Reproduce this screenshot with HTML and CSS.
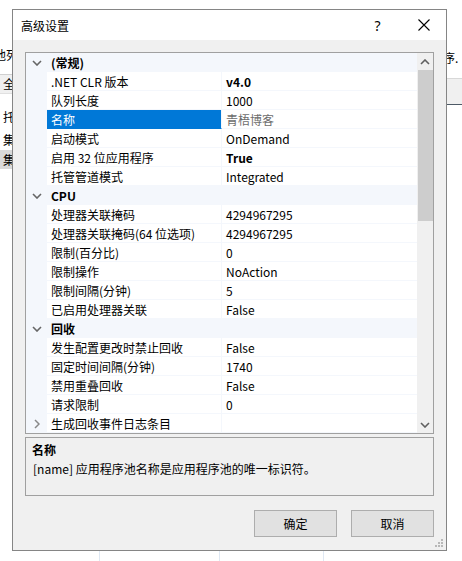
FILE: index.html
```html
<!DOCTYPE html>
<html lang="zh-CN">
<head>
<meta charset="utf-8">
<title>高级设置</title>
<link rel="stylesheet" href="styles.css">
</head>
<body>
<div class="desktop">
  <div class="bg-left">
    <div class="bg-text t1">池列</div>
    <div class="bg-tab">全</div>
    <div class="bg-text t2">托</div>
    <div class="bg-text t3">集</div>
    <div class="bg-sel">集</div>
  </div>
  <div class="bg-right">
    <div class="bg-text r1">程序.</div>
    <div class="bg-hdr"></div>
  </div>
  <div class="vline v1"></div>
  <div class="vline v2"></div>
  <div class="vline v3"></div>

  <div class="dialog">
    <div class="titlebar">
      <span class="title">高级设置</span>
      <span class="help">?</span>
      <svg class="close" width="12" height="12" viewBox="0 0 12 12"><path d="M0.5 0.5 L11.5 11.5 M11.5 0.5 L0.5 11.5" stroke="#000" stroke-width="1.1" fill="none"/></svg>
    </div>
    <div class="body">
      <div class="grid">
        <div class="rows">
          <div class="row cat"><span class="m"><svg width="10" height="6" viewBox="0 0 10 6"><path d="M1 1 L5 5 L9 1" stroke="#666" stroke-width="1.6" fill="none"/></svg></span><span class="cname">(常规)</span></div>
          <div class="row"><span class="m"></span><span class="n">.NET CLR 版本</span><span class="v b">v4.0</span></div>
          <div class="row"><span class="m"></span><span class="n">队列长度</span><span class="v">1000</span></div>
          <div class="row sel"><span class="m"></span><span class="n">名称</span><span class="v g">青梧博客</span></div>
          <div class="row"><span class="m"></span><span class="n">启动模式</span><span class="v">OnDemand</span></div>
          <div class="row"><span class="m"></span><span class="n">启用 32 位应用程序</span><span class="v b">True</span></div>
          <div class="row"><span class="m"></span><span class="n">托管管道模式</span><span class="v">Integrated</span></div>
          <div class="row cat"><span class="m"><svg width="10" height="6" viewBox="0 0 10 6"><path d="M1 1 L5 5 L9 1" stroke="#666" stroke-width="1.6" fill="none"/></svg></span><span class="cname">CPU</span></div>
          <div class="row"><span class="m"></span><span class="n">处理器关联掩码</span><span class="v">4294967295</span></div>
          <div class="row"><span class="m"></span><span class="n">处理器关联掩码(64 位选项)</span><span class="v">4294967295</span></div>
          <div class="row"><span class="m"></span><span class="n">限制(百分比)</span><span class="v">0</span></div>
          <div class="row"><span class="m"></span><span class="n">限制操作</span><span class="v">NoAction</span></div>
          <div class="row"><span class="m"></span><span class="n">限制间隔(分钟)</span><span class="v">5</span></div>
          <div class="row"><span class="m"></span><span class="n">已启用处理器关联</span><span class="v">False</span></div>
          <div class="row cat"><span class="m"><svg width="10" height="6" viewBox="0 0 10 6"><path d="M1 1 L5 5 L9 1" stroke="#666" stroke-width="1.6" fill="none"/></svg></span><span class="cname">回收</span></div>
          <div class="row"><span class="m"></span><span class="n">发生配置更改时禁止回收</span><span class="v">False</span></div>
          <div class="row"><span class="m"></span><span class="n">固定时间间隔(分钟)</span><span class="v">1740</span></div>
          <div class="row"><span class="m"></span><span class="n">禁用重叠回收</span><span class="v">False</span></div>
          <div class="row"><span class="m"></span><span class="n">请求限制</span><span class="v">0</span></div>
          <div class="row"><span class="m"><svg width="6" height="10" viewBox="0 0 6 10"><path d="M1 1 L5 5 L1 9" stroke="#888" stroke-width="1.5" fill="none"/></svg></span><span class="n">生成回收事件日志条目</span><span class="v"></span></div>
        </div>
        <div class="scrollbar">
          <div class="arrow"><svg width="10" height="6" viewBox="0 0 10 6"><path d="M1 5 L5 1 L9 5" stroke="#606060" stroke-width="1.6" fill="none"/></svg></div>
          <div class="thumb"></div>
          <div class="track"></div>
          <div class="arrow"><svg width="10" height="6" viewBox="0 0 10 6"><path d="M1 1 L5 5 L9 1" stroke="#606060" stroke-width="1.6" fill="none"/></svg></div>
        </div>
      </div>
      <div class="desc">
        <div class="desc-title">名称</div>
        <div class="desc-text">[name] 应用程序池名称是应用程序池的唯一标识符。</div>
      </div>
      <div class="buttons">
        <button class="btn">确定</button>
        <button class="btn">取消</button>
      </div>
    </div>
    <svg class="grip" width="10" height="10" viewBox="0 0 10 10">
      <rect x="7" y="1" width="2" height="2" fill="#b8b8b8"/>
      <rect x="4" y="4" width="2" height="2" fill="#b8b8b8"/>
      <rect x="7" y="4" width="2" height="2" fill="#b8b8b8"/>
      <rect x="1" y="7" width="2" height="2" fill="#b8b8b8"/>
      <rect x="4" y="7" width="2" height="2" fill="#b8b8b8"/>
      <rect x="7" y="7" width="2" height="2" fill="#b8b8b8"/>
    </svg>
  </div>
</div>
</body>
</html>
```
FILE: styles.css
```css
* { box-sizing: border-box; }
html, body { margin: 0; padding: 0; }
body {
  font-family: "Noto Sans CJK SC", "Noto Sans", sans-serif;
  font-size: 12px;
  color: #000;
  background: #fff;
}
.desktop {
  position: relative;
  width: 462px;
  height: 561px;
  overflow: hidden;
  background: #fff;
}
/* background window fragments */
.bg-left { position: absolute; left: 0; top: 0; width: 14px; height: 561px; }
.bg-right { position: absolute; left: 430px; top: 0; width: 32px; height: 561px; }
.bg-text { position: absolute; line-height: 16px; white-space: nowrap; }
.t1 { left: -6px; top: 47px; }
.t2 { left: 3px; top: 109px; }
.t3 { left: 3px; top: 132px; }
.bg-tab {
  position: absolute; left: 0; top: 74px; width: 14px; height: 20px;
  background: #f0f0f0; border-top: 1px solid #d0d0d0; border-bottom: 1px solid #e0e0e0;
  padding-left: 3px; line-height: 18px;
}
.bg-sel {
  position: absolute; left: 0; top: 150px; width: 14px; height: 19px;
  background: #d9d9d9; padding-left: 3px; line-height: 19px;
}
.r1 { left: 1px; top: 50px; }
.bg-hdr {
  position: absolute; left: 0; top: 78px; width: 32px; height: 27px;
  background: #f0f0f0; border-top: 1px solid #d8d8d8; border-bottom: 1px solid #4d5a66;
}
.vline { position: absolute; top: 551px; width: 1px; height: 10px; background: #dfe8f3; }
.v1 { left: 99px; }
.v2 { left: 219px; }
.v3 { left: 323px; }

/* dialog */
.dialog {
  position: absolute;
  left: 12px; top: 9px;
  width: 435px; height: 542px;
  border: 1px solid #858585;
  display: flex; flex-direction: column;
  background: #f0f0f0;
}
.titlebar {
  height: 30px; background: #fff;
  display: flex; align-items: center;
  padding-left: 8px;
  flex: none;
}
.title { flex: 1; font-size: 12px; }
.help { font-size: 14px; width: 13px; margin-right: 34px; text-align: center; font-family: "Noto Sans", sans-serif; }
.close { margin-right: 16px; }
.body {
  flex: 1;
  padding: 12px 12px 13px 12px;
  display: flex; flex-direction: column;
}
.grid {
  height: 382px;
  border: 1px solid #a0a0a0;
  background: #fff;
  display: flex;
  flex: none;
}
.rows { width: 391px; display: flex; flex-direction: column; }
.row { display: flex; height: 19px; }
.row .m {
  width: 21px; flex: none; background: #f4f7fc;
  display: flex; align-items: center; justify-content: center;
}
.row .n {
  width: 175px; flex: none;
  padding: 1px 0 0 4px; line-height: 17px;
  border-right: 1px solid #f4f7fc;
  border-bottom: 1px solid #f4f7fc;
  white-space: nowrap; overflow: hidden;
}
.row .v {
  flex: 1; padding: 1px 0 0 4px; line-height: 17px;
  border-bottom: 1px solid #f4f7fc;
  white-space: nowrap; overflow: hidden;
}
.row .v.b { font-weight: bold; }
.row .v.g { color: #6d6d6d; }
.row.sel .n { background: #0078d7; color: #fff; border-bottom-color: #0078d7; }
.row.cat { background: #f4f7fc; }
.row.cat .m { padding-left: 1px; }
.cname { padding: 1px 0 0 4px; line-height: 18px; font-weight: bold; }
.scrollbar {
  width: 16px; flex: none; background: #f0f0f0;
  display: flex; flex-direction: column;
}
.arrow { height: 17px; display: flex; align-items: center; justify-content: center; flex: none; }
.thumb { height: 151px; background: #cdcdcd; margin-left: 1px; flex: none; }
.track { flex: 1; }
.desc {
  margin-top: 3px; height: 59px; flex: none;
  border: 1px solid #a0a0a0;
  padding: 2px 6px 0 6px;
  line-height: 19px;
}
.desc-title { font-weight: bold; }
.desc-text { padding-left: 1px; }
.buttons {
  margin-top: 14px; height: 27px; flex: none;
  display: flex; justify-content: flex-end; gap: 14px;
}
.btn {
  width: 83px; height: 27px;
  background: #e1e1e1; border: 1px solid #adadad;
  font-family: inherit; font-size: 12px; color: #000;
  padding: 0;
}
.grip { position: absolute; right: 2px; bottom: 2px; }
```
